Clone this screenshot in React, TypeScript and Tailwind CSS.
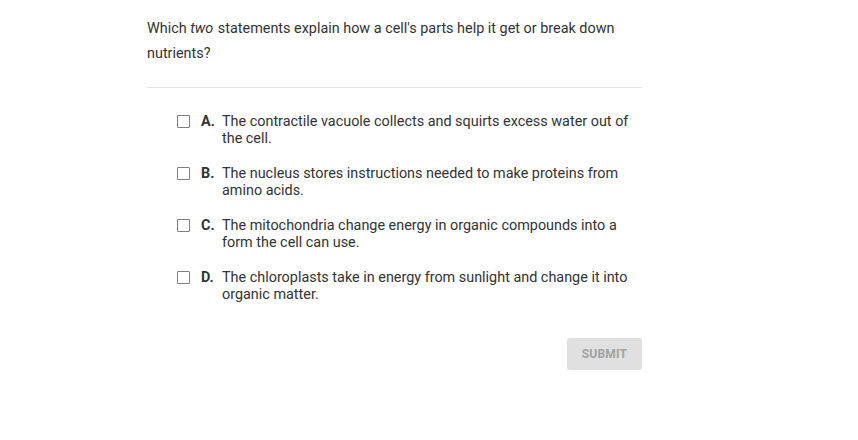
const options = [
  { letter: "A.", text: "The contractile vacuole collects and squirts excess water out of the cell." },
  { letter: "B.", text: "The nucleus stores instructions needed to make proteins from amino acids." },
  { letter: "C.", text: "The mitochondria change energy in organic compounds into a form the cell can use." },
  { letter: "D.", text: "The chloroplasts take in energy from sunlight and change it into organic matter." },
];

export default function App() {
  return (
    <div className="w-[858px] h-[440px] bg-white text-[#333] font-['Roboto',sans-serif]">
      <div className="ml-[147px] w-[495px] pt-[16px]">
        <p className="text-[14.4px] leading-[25px]">
          Which <em className="pr-[1px]">two</em> statements explain how a cell's parts help it get or break down nutrients?
        </p>
        <div className="mt-[21px] border-t border-[#e3e3e3]" />
        <div className="mt-[25px] flex flex-col gap-[18px] pl-[30px]">
          {options.map((o) => (
            <div key={o.letter} className="flex items-start">
              <div className="mt-[2px] w-[13px] h-[13px] border border-[#808080] rounded-[1px] bg-white shrink-0" />
              <span className="ml-[11px] w-[21px] shrink-0 font-bold text-[14.4px] leading-[17px]">{o.letter}</span>
              <span className="text-[14.4px] leading-[17px] pr-[8px]">{o.text}</span>
            </div>
          ))}
        </div>
        <div className="mt-[35px] flex justify-end">
          <button className="w-[75px] h-[32px] rounded-[3px] bg-[#e0e0e0] text-[#a2a2a2] text-[12px] font-bold tracking-[0.2px]">
            SUBMIT
          </button>
        </div>
      </div>
    </div>
  );
}
